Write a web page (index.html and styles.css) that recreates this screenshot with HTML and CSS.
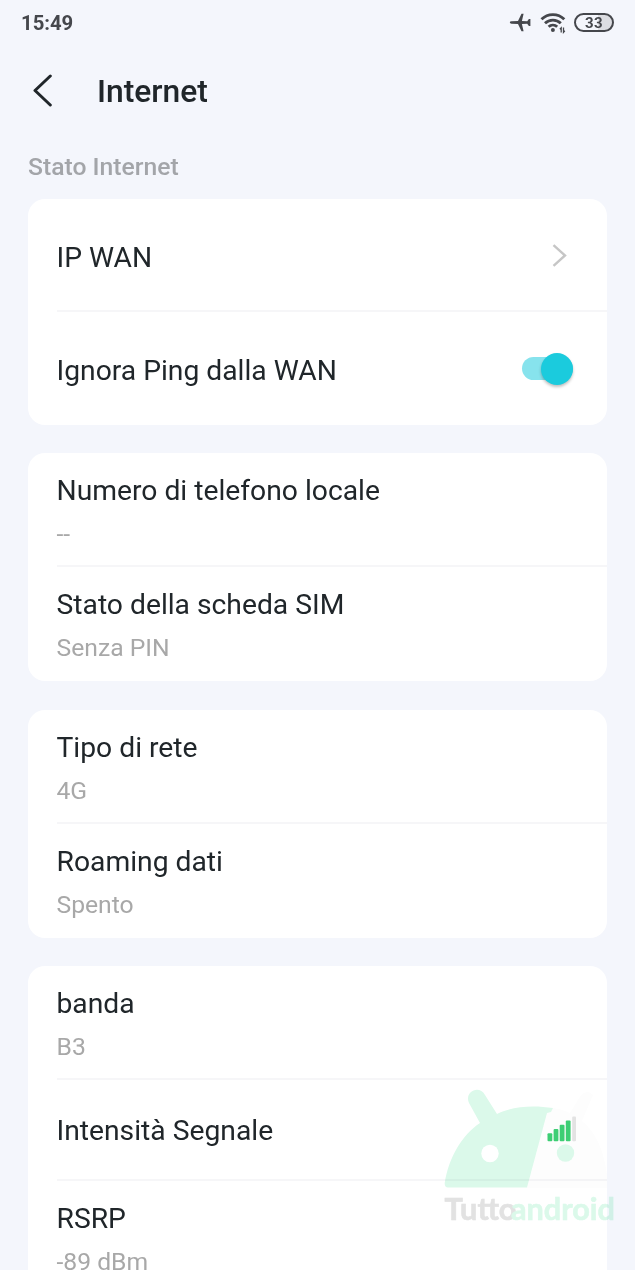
FILE: index.html
```html
<!DOCTYPE html>
<html lang="it">
<head>
  <meta charset="UTF-8" />
  <meta name="viewport" content="width=device-width, initial-scale=1" />
  <title>Internet</title>
  <link rel="stylesheet" href="styles.css">
</head>
<body>

  <div class="screen">
    <!-- Status bar -->
    <div class="status-bar">
      <span class="clock">15:49</span>
      <div class="status-icons">
        <svg class="icon-plane" width="22" height="20" viewBox="0 0 22 20">
          <path d="M0.8 9.5 Q0.8 8.4 2.500 8.300 L9 8 L12.500 0.8 H14.6 L12.9 8.1 L18.200 8.3 L19.900 6 H21.400 V13 H19.900 L18.200 10.700 L12.9 10.900 L14.6 18.200 H12.500 L9 11 L2.500 10.700 Q0.8 10.600 0.8 9.5 Z"/>
        </svg>
        <svg class="icon-wifi" width="27" height="22" viewBox="0 0 27 22">
          <path class="arc" d="M1.5 7.3 A16 16 0 0 1 24.3 7.3"/>
          <path class="arc" d="M5 11.3 A11.3 11.3 0 0 1 20.8 11.3"/>
          <path class="arc" d="M8.6 14.8 A6.3 6.3 0 0 1 17.2 14.8"/>
          <circle cx="12.9" cy="17.9" r="2"/>
          <path class="arrows" d="M21.2 20.5 V15.8 L19.9 17.2 M23.5 15.6 V20.3 L24.8 18.8"/>
        </svg>
        <div class="battery">33</div>
      </div>
    </div>

    <!-- Header -->
    <div class="header">
      <svg class="back" width="20" height="34" viewBox="0 0 20 34">
        <path d="M17.3 2 L2 16.5 L17.3 31"/>
      </svg>
      <h1>Internet</h1>
    </div>

    <div class="section-title">Stato Internet</div>

    <div class="card">
      <div class="row row-single">
        <div class="label">IP WAN</div>
        <svg class="chevron" width="15" height="23" viewBox="0 0 15 23">
          <path d="M1.5 1.2 L13 11.5 L1.5 21.8"/>
        </svg>
      </div>
      <div class="row row-single">
        <div class="label">Ignora Ping dalla WAN</div>
        <div class="toggle"><span class="knob"></span></div>
      </div>
    </div>

    <div class="card">
      <div class="row">
        <div class="label">Numero di telefono locale</div>
        <div class="value">--</div>
      </div>
      <div class="row">
        <div class="label">Stato della scheda SIM</div>
        <div class="value">Senza PIN</div>
      </div>
    </div>

    <div class="card">
      <div class="row">
        <div class="label">Tipo di rete</div>
        <div class="value">4G</div>
      </div>
      <div class="row">
        <div class="label">Roaming dati</div>
        <div class="value">Spento</div>
      </div>
    </div>

    <div class="card">
      <div class="row">
        <div class="label">banda</div>
        <div class="value">B3</div>
      </div>
      <div class="row row-single row-signal">
        <div class="label">Intensità Segnale</div>
        <svg class="signal" width="30" height="26" viewBox="0 0 30 26">
          <rect x="0.5" y="17.2" width="4.8" height="8" rx="1"/>
          <rect x="6.6" y="13" width="4.8" height="12.2" rx="1"/>
          <rect x="12.7" y="8.8" width="4.8" height="16.4" rx="1"/>
          <rect x="18.8" y="4.6" width="4.8" height="20.6" rx="1"/>
          <rect class="off" x="25.2" y="0.4" width="3.8" height="24.8" rx="1"/>
        </svg>
      </div>
      <div class="row">
        <div class="label">RSRP</div>
        <div class="value">-89 dBm</div>
      </div>
    </div>

    <!-- Watermark -->
    <svg class="watermark" width="205" height="160" viewBox="0 0 205 160">
      <path class="shade" d="M117 37 L123 33 Q132 34 140 38 L151 20 Q158 14 163 20 L152 46 Q172 62 177 100 V113 H97 Z"/>
      <path class="mint" d="M18 112.5 Q14.5 112.5 14.7 108 C19 82 32 60 50 48 L39 28 C34 17 49 9 55 20 L67 39 C83 31 103 30 123 33 L121 37 L117 38 L97 112.5 Z"/>
      <circle class="eye" cx="60" cy="78.5" r="8.7"/>
      <circle class="mint" cx="135.5" cy="78" r="8.7"/>
      <text class="gray" x="14.5" y="145" textLength="72" lengthAdjust="spacingAndGlyphs">Tutto</text>
      <text class="mint" x="81" y="145" textLength="104" lengthAdjust="spacingAndGlyphs">android</text>
    </svg>
  </div>

</body>
</html>
```

FILE: styles.css
```css
* {
  box-sizing: border-box;
  margin: 0;
  padding: 0;
}

body {
  font-family: Roboto, sans-serif;
  background: #f4f6fc;
  color: #20262a;
}

.screen {
  position: relative;
  height: 1270px;
  overflow: hidden;
}

.status-bar {
  display: flex;
  align-items: center;
  justify-content: space-between;
  height: 45px;
  padding: 0 21px;
}

.clock {
  font-size: 20.3px;
  font-weight: 700;
  color: #45474c;
}

.status-icons {
  display: flex;
  align-items: center;
}

.icon-plane {
  margin-right: 9px;
  fill: #45474c;
}

.icon-wifi {
  margin-right: 7px;
  fill: #45474c;
}

.icon-wifi .arc {
  fill: none;
  stroke: #45474c;
  stroke-width: 2.8;
}

.icon-wifi .arrows {
  fill: none;
  stroke: #45474c;
  stroke-width: 1.3;
}

.battery {
  width: 40px;
  height: 19px;
  border: 2px solid #45474c;
  border-radius: 10px;
  background: linear-gradient(to right, #f4f6fc 0 62%, #dcdde2 62%);
  font-size: 15px;
  font-weight: 700;
  line-height: 16px;
  letter-spacing: 0.3px;
  text-align: center;
  color: #45474c;
}

.header {
  display: flex;
  align-items: center;
  height: 92px;
  padding-left: 33px;
}

.back {
  margin-right: 44px;
  fill: none;
  stroke: #20262a;
  stroke-width: 3;
  stroke-linecap: round;
  stroke-linejoin: round;
}

h1 {
  font-size: 31.8px;
  font-weight: 500;
}

.section-title {
  height: 62px;
  padding-left: 28px;
  font-size: 24.7px;
  font-weight: 500;
  line-height: 59px;
  color: #a3a5a9;
}

.card {
  margin: 0 28px 28.4px;
  padding-left: 28.5px;
  border-radius: 17px;
  background: #fff;
}

.row {
  height: 114px;
  padding-top: 17px;
}

.row + .row {
  height: 116px;
  border-top: 2px solid #f6f6f8;
  margin-top: -2px;
}

.row-single {
  display: flex;
  align-items: center;
  justify-content: space-between;
  height: 113px;
  padding: 0 34px 0 0;
}

.row + .row-single {
  height: 115px;
}

.row + .row-signal {
  height: 102.5px;
}

.label {
  font-size: 28.25px;
  line-height: 42px;
}

.row-single .label {
  padding-top: 5px;
}

.row-signal .label {
  padding-top: 1px;
}

.value {
  font-size: 24.7px;
  line-height: 44px;
  color: #a8a8a8;
}

.chevron {
  margin-right: 6px;
  fill: none;
  stroke: #c6c6c6;
  stroke-width: 2.4;
}

.toggle {
  display: flex;
  align-items: center;
  justify-content: flex-end;
  width: 51px;
  height: 23px;
  border-radius: 12px;
  background: #87e3ed;
}

.knob {
  flex: none;
  width: 32px;
  height: 32px;
  border-radius: 50%;
  background: #1bcbdd;
  box-shadow: 0 2px 3px rgba(0, 0, 0, 0.25);
}

.signal {
  position: relative;
  z-index: 2;
  margin: 0 -4px 2px 0;
  fill: #3dce74;
}

.signal .off {
  fill: #e3e3e3;
}

/* lies over the last card */
.watermark {
  position: absolute;
  left: 430px;
  top: 1075px;
  mix-blend-mode: multiply;
  font-family: Lato, sans-serif;
  font-size: 30px;
  font-weight: 700;
}

.watermark .mint {
  fill: #dbf9ea;
}

.watermark .gray {
  fill: #e2e2e2;
}

.watermark text {
  stroke-width: 0.6;
}

.watermark text.mint {
  stroke: #dbf9ea;
}

.watermark text.gray {
  stroke: #e2e2e2;
}

.watermark .eye {
  fill: #fff;
}

.watermark .shade {
  fill: #fdfdfd;
}
```
